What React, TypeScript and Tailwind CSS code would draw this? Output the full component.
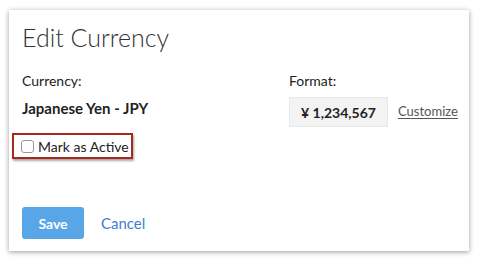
export default function App() {
  return (
    <div className="w-[479px] h-[262px] bg-white pt-[10px] pl-[9px]" style={{ fontFamily: "Lato, 'Liberation Sans', sans-serif" }}>
      <div className="w-[460px] h-[241px] bg-white shadow-[0_1px_5px_rgba(0,0,0,0.4)] pl-[13px] pt-[12px]">
        <h1 className="text-[25px] leading-[30px] font-light text-[#333]">Edit Currency</h1>
        <div className="mt-[20px] grid grid-cols-[267px_1fr] text-[14px] text-[#222]">
          <div>
            <div className="leading-[18px]">Currency:</div>
            <div className="mt-[9px] leading-[18px] text-[15px] font-bold">Japanese Yen - JPY</div>
          </div>
          <div>
            <div className="leading-[18px]">Format:</div>
            <div className="mt-[7px] flex items-center">
              <div className="w-[99px] h-[30px] flex items-center justify-center bg-[#f3f3f3] border border-[#e8e8e8] font-bold text-[#222]">
                ¥ 1,234,567
              </div>
              <a className="ml-[10px] text-[13px] text-[#555] underline underline-offset-2">Customize</a>
            </div>
          </div>
        </div>
        <div className="mt-[6px] -ml-[10px] w-[121px] h-[26px] border-2 border-[#a8281a] shadow-[1px_2px_2px_rgba(0,0,0,0.35)] flex items-center pl-[7px]">
          <span className="w-[13px] h-[13px] rounded-[3px] border border-[#999] bg-white" />
          <span className="ml-[4px] text-[14px] text-[#222]">Mark as Active</span>
        </div>
        <div className="mt-[48px] flex items-center">
          <button className="w-[62px] h-[32px] rounded-[3px] bg-[#58a6e8] text-white text-[14px] font-bold">Save</button>
          <a className="ml-[17px] text-[15px] text-[#3d7fd0]">Cancel</a>
        </div>
      </div>
    </div>
  );
}
